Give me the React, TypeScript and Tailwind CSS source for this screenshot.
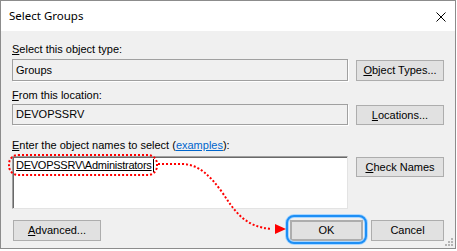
import React from "react";

const ui = { fontFamily: '"Liberation Sans", Arial, sans-serif' };

function Btn({ children, className = "" }: { children: React.ReactNode; className?: string }) {
  return (
    <div
      className={
        "flex items-center justify-center bg-[#e1e1e1] border border-[#adadad] text-[11px] leading-[13px] text-black " +
        className
      }
    >
      {children}
    </div>
  );
}

function Label({ children, className = "" }: { children: React.ReactNode; className?: string }) {
  return <div className={"h-[13px] text-[11px] leading-[13px] text-black whitespace-nowrap " + className}>{children}</div>;
}

export default function App() {
  return (
    <div className="relative w-[457px] h-[251px] bg-white overflow-hidden" style={ui}>
      {/* dialog window */}
      <div className="relative w-[456px] h-[249px] border border-[#8c8c8c] flex flex-col">
        {/* title bar */}
        <div className="h-[30px] bg-white flex items-center justify-between pl-[8px] pr-[9px]">
          <span className="text-[11.5px] text-black" style={{ fontFamily: '"Noto Sans", sans-serif' }}>
            Select Groups
          </span>
          <svg width="10" height="10" viewBox="0 0 10 10" className="mt-[1px]">
            <path d="M0.5 0.5 L9.5 9.5 M9.5 0.5 L0.5 9.5" stroke="#000" strokeWidth="1" />
          </svg>
        </div>

        {/* body */}
        <div className="flex-1 bg-[#f0f0f0] pt-[12px] px-[11px] flex flex-col">
          <Label>
            <u>S</u>elect this object type:
          </Label>
          <div className="mt-[3px] flex gap-[8px]">
            <div className="w-[336px] h-[22px] border border-[#a0a0a0] shadow-[1px_1px_0_#ffffff] flex items-center pl-[3px] text-[11px] leading-[13px]">
              Groups
            </div>
            <Btn className="mt-[1px] w-[88px] h-[21px]">
              <span>
                <u>O</u>bject Types...
              </span>
            </Btn>
          </div>

          <Label className="mt-[8px]">
            <u>F</u>rom this location:
          </Label>
          <div className="mt-[2px] flex gap-[8px]">
            <div className="w-[336px] h-[21px] border border-[#a0a0a0] shadow-[1px_1px_0_#ffffff] flex items-center pl-[3px] text-[11px] leading-[13px]">
              DEVOPSSRV
            </div>
            <Btn className="mt-[1px] w-[88px] h-[20px]">
              <span>
                <u>L</u>ocations...
              </span>
            </Btn>
          </div>

          <Label className="mt-[14px]">
            <u>E</u>nter the object names to select (
            <span className="text-[#0066cc] underline">examples</span>):
          </Label>
          <div className="mt-[4px] flex gap-[8px]">
            <div className="w-[336px] h-[53px] bg-white border border-[#a0a0a0] border-r-[#e3e3e3] border-b-[#e3e3e3]">
              <div className="border-l border-t border-[#696969] h-full w-full pl-[2px] pt-[1px] text-[11px] leading-[13px]">
                <span className="inline-block align-top text-[11px] leading-[13px] tracking-[-0.25px] underline underline-offset-[1px] border-r border-black pr-[1px]">
                  DEVOPSSRV\Administrators
                </span>
              </div>
            </div>
            <Btn className="mt-[1px] w-[88px] h-[20px]">
              <span>
                <u>C</u>heck Names
              </span>
            </Btn>
          </div>

          <div className="mt-[11px] flex items-center">
            <Btn className="ml-[1px] w-[88px] h-[21px]">
              <span>
                <u>A</u>dvanced...
              </span>
            </Btn>
            <div className="ml-auto flex gap-[8px]">
              <Btn className="w-[73px] h-[21px] border-2 border-[#0078d7]">OK</Btn>
              <Btn className="w-[73px] h-[21px]">Cancel</Btn>
            </div>
          </div>
        </div>

        {/* resize grip */}
        <svg className="absolute right-[1px] bottom-[1px]" width="10" height="10" viewBox="0 0 10 10">
          <g fill="#b4b4b4">
            <rect x="7" y="1" width="2" height="2" />
            <rect x="4" y="4" width="2" height="2" />
            <rect x="7" y="4" width="2" height="2" />
            <rect x="1" y="7" width="2" height="2" />
            <rect x="4" y="7" width="2" height="2" />
            <rect x="7" y="7" width="2" height="2" />
          </g>
        </svg>
      </div>

      {/* annotation overlay */}
      <svg className="absolute inset-0 pointer-events-none" width="457" height="251" viewBox="0 0 457 251">
        <rect x="287" y="216" width="79" height="27" rx="7" fill="none" stroke="#a9d6ff" strokeWidth="4" />
        <rect x="287" y="216" width="79" height="27" rx="7" fill="none" stroke="#1e8ff5" strokeWidth="2" />
        <rect x="9" y="155" width="148" height="20" rx="9" fill="none" stroke="#ff0000" strokeWidth="2" strokeDasharray="2 2" />
        <path
          d="M158 164 L183 164 C200 165 210 176 222 192 C235 212 245 227 272 229"
          fill="none"
          stroke="#ff0000"
          strokeWidth="2"
          strokeDasharray="2 2"
        />
        <polygon points="275,224 286,229 275,234" fill="#ff0000" />
      </svg>
    </div>
  );
}
